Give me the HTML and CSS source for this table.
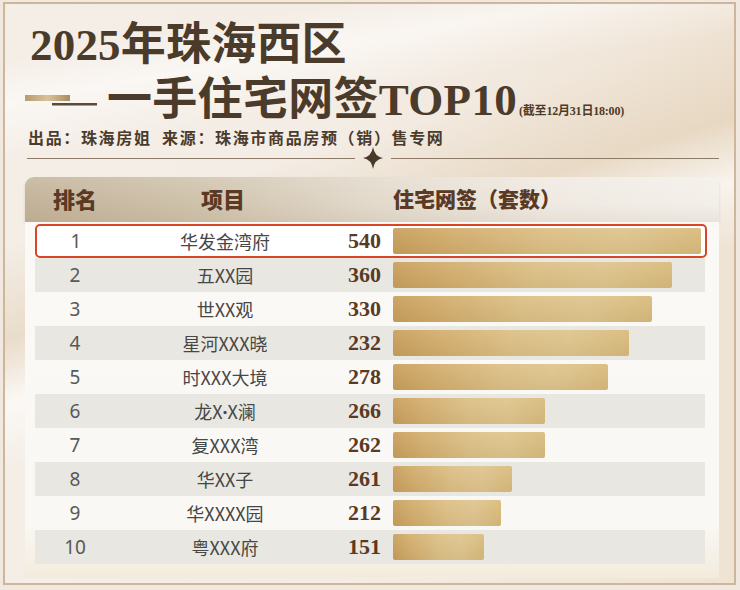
FILE: index.html
```html
<!DOCTYPE html>
<html lang="zh-CN">
<head>
<meta charset="utf-8">
<title>2025年珠海西区一手住宅网签TOP10</title>
<link rel="stylesheet" href="styles.css">
</head>
<body>
<div class="frame">
  <div class="title">
    <div class="t1">2025年珠海西区</div>
    <div class="t2">
      <svg class="deco" width="72" height="14" viewBox="0 0 72 14">
        <defs>
          <linearGradient id="g1" x1="0" x2="1" y1="0" y2="0">
            <stop offset="0" stop-color="#b89a6c"/>
            <stop offset="0.5" stop-color="#d8c29a"/>
            <stop offset="1" stop-color="#a88c62"/>
          </linearGradient>
        </defs>
        <rect x="0" y="1" width="45" height="6" fill="url(#g1)"/>
        <rect x="27" y="9" width="45" height="2.5" fill="#5c4a36"/>
      </svg>
      <span class="big">一手住宅网签TOP10</span><span class="note">(截至12月31日18:00)</span>
    </div>
  </div>
  <div class="sub">出品：珠海房姐&nbsp;&nbsp;来源：珠海市商品房预（销）售专网</div>
  <div class="divider">
    <span class="ln"></span>
    <svg class="star" width="20" height="22" viewBox="0 0 20 22">
      <path d="M10 0 Q11.5 9.5 20 11 Q11.5 12.5 10 22 Q8.5 12.5 0 11 Q8.5 9.5 10 0 Z" fill="#4a3a28"/>
    </svg>
    <span class="ln"></span>
  </div>
  <div class="table">
    <div class="thead">
      <span class="h-rank">排名</span>
      <span class="h-name">项目</span>
      <span class="h-num"></span>
      <span class="h-val">住宅网签（套数）</span>
    </div>
    <div class="tbody">
      <div class="row hl"><span class="rank">1</span><span class="name">华发金湾府</span><span class="num">540</span><span class="track"><span class="bar" style="width:310px"></span></span></div>
      <div class="row alt"><span class="rank">2</span><span class="name">五XX园</span><span class="num">360</span><span class="track"><span class="bar" style="width:279px"></span></span></div>
      <div class="row"><span class="rank">3</span><span class="name">世XX观</span><span class="num">330</span><span class="track"><span class="bar" style="width:259px"></span></span></div>
      <div class="row alt"><span class="rank">4</span><span class="name">星河XXX晓</span><span class="num">232</span><span class="track"><span class="bar" style="width:236px"></span></span></div>
      <div class="row"><span class="rank">5</span><span class="name">时XXX大境</span><span class="num">278</span><span class="track"><span class="bar" style="width:215px"></span></span></div>
      <div class="row alt"><span class="rank">6</span><span class="name">龙X<span class="dot">·</span>X澜</span><span class="num">266</span><span class="track"><span class="bar" style="width:152px"></span></span></div>
      <div class="row"><span class="rank">7</span><span class="name">复XXX湾</span><span class="num">262</span><span class="track"><span class="bar" style="width:152px"></span></span></div>
      <div class="row alt"><span class="rank">8</span><span class="name">华XX子</span><span class="num">261</span><span class="track"><span class="bar" style="width:119px"></span></span></div>
      <div class="row"><span class="rank">9</span><span class="name">华XXXX园</span><span class="num">212</span><span class="track"><span class="bar" style="width:108px"></span></span></div>
      <div class="row alt"><span class="rank">10</span><span class="name">粤XXX府</span><span class="num">151</span><span class="track"><span class="bar" style="width:91px"></span></span></div>
    </div>
  </div>
</div>
</body>
</html>
```

FILE: styles.css
```css
html, body {
  margin: 0;
  padding: 0;
}
body {
  width: 740px;
  height: 590px;
  overflow: hidden;
  background: #f1e9e0;
  font-family: "Noto Sans CJK SC", "Noto Sans", sans-serif;
}
.frame {
  box-sizing: border-box;
  margin: 2px 4px 0 3px;
  height: 583px;
  border: 2px solid #ccb79d;
  padding: 14px 15px 0 20px;
  background:
    linear-gradient(170deg, rgba(255,255,255,0) 0%, rgba(255,255,255,0) 8%, rgba(255,255,255,0.55) 14%, rgba(255,255,255,0) 22%),
    linear-gradient(163deg, rgba(233,218,196,0) 30%, rgba(226,208,182,0.6) 42%, rgba(255,255,255,0.6) 50%, rgba(255,255,255,0) 58%),
    linear-gradient(90deg, #f4eee7 0%, #f4ede5 45%, #efe3d4 100%);
}
.title {
  color: #4b3b2b;
  font-family: "Liberation Serif", "Noto Sans CJK SC", serif;
  font-weight: 700;
}
.t1 {
  font-size: 45px;
  line-height: 55px;
  padding-left: 5px;
  letter-spacing: 0.2px;
}
.t2 {
  display: flex;
  align-items: baseline;
  height: 55px;
  line-height: 55px;
}
.deco {
  align-self: center;
  margin-right: 10px;
  flex: none;
}
.big {
  font-size: 45px;
  letter-spacing: 0.3px;
}
.note {
  font-size: 12px;
  margin-left: 2px;
  letter-spacing: -0.2px;
}
.sub {
  padding-left: 3px;
  font-size: 16px;
  line-height: 18px;
  font-weight: 700;
  letter-spacing: 1.65px;
  color: #4b3b2b;
}
.divider {
  display: flex;
  align-items: center;
  height: 22px;
  margin-top: 1px;
  padding-left: 2px;
}
.divider .ln {
  flex: 1;
  height: 1px;
  background: #8c7b68;
}
.star {
  margin: 0 8px;
  flex: none;
}
.table {
  margin-top: 8px;
}
.thead {
  display: grid;
  grid-template-columns: 80px 220px 46px 1fr;
  align-items: center;
  height: 45px;
  padding: 0 0 3px 10px;
  box-sizing: border-box;
  border-radius: 9px 9px 0 0;
  background:
    linear-gradient(180deg, rgba(255,255,255,0.15) 0%, rgba(0,0,0,0) 60%, rgba(120,100,70,0.08) 100%),
    linear-gradient(90deg, #c2b298 0%, #cfc2ab 25%, #e2d9cb 50%, #efe9e1 75%, #f3efe9 100%);
  box-shadow: 0 2px 3px rgba(140,120,90,0.25);
  color: #5a3a24;
  font-family: "Liberation Serif", "Noto Sans CJK SC", serif;
  font-weight: 900;
  font-size: 22px;
}
.h-rank, .h-name {
  text-align: center;
}
.h-name {
  padding-right: 4px;
}
.h-val {
  padding-left: 12px;
  font-size: 21px;
}
.tbody {
  padding: 2px 12px 14px 10px;
  background: linear-gradient(180deg, #fbf9f6 0%, #faf8f4 85%, #f3ebdc 100%);
}
.row {
  display: grid;
  grid-template-columns: 80px 220px 46px 1fr;
  align-items: center;
  height: 34px;
  box-sizing: border-box;
}
.row.alt {
  background: #e9e7e1;
  margin-right: 2px;
}
.row.hl {
  grid-template-columns: 78px 220px 46px 1fr;
  border: 2px solid #d8462a;
  border-radius: 5px;
  background: #ffffff;
}
.rank {
  text-align: center;
  font-family: "Noto Sans", sans-serif;
  font-size: 19px;
  color: #585858;
}
.name {
  text-align: center;
  font-size: 18px;
  color: #474747;
}
.dot {
  font-family: "Noto Sans", sans-serif;
  font-weight: 700;
}
.num {
  text-align: right;
  font-family: "Liberation Serif", serif;
  font-weight: 700;
  font-size: 22px;
  color: #5a3a24;
}
.track {
  display: flex;
  padding-left: 12px;
}
.bar {
  display: block;
  height: 26px;
  border-radius: 2px;
  background:
    linear-gradient(180deg, rgba(255,255,255,0.08), rgba(0,0,0,0.04)),
    linear-gradient(90deg, #c89f5b 0%, #d3ad6c 20%, #dcbf84 50%, #dfc48c 75%, #d8ba7b 100%);
}
.row.hl .bar {
  width: 308px !important;
}
```
